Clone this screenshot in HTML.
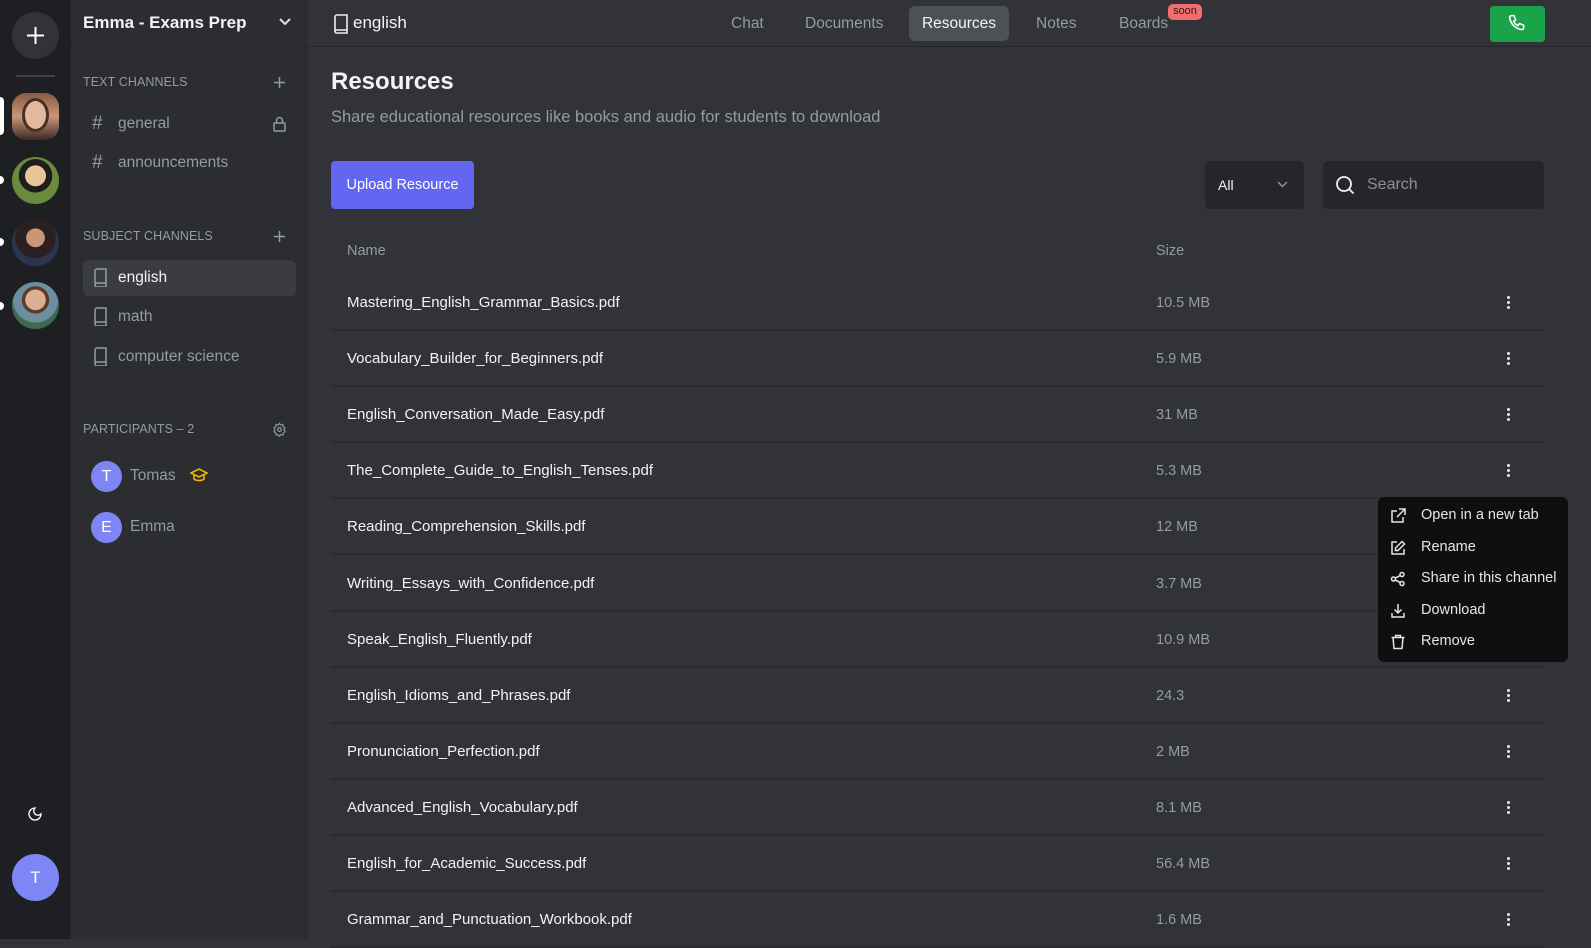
<!DOCTYPE html>
<html><head><meta charset="utf-8"><style>
*{margin:0;padding:0;box-sizing:border-box}
body{width:1591px;height:939px;overflow:hidden;background:#313338;font-family:"Liberation Sans",sans-serif;position:relative;color:#dbdee1}
.a{position:absolute}
.rail{left:0;top:0;width:71px;height:939px;background:#1e1f22}
.side{left:71px;top:0;width:237px;height:939px;background:#2b2d31}
.main{left:308px;top:0;right:0;height:939px;background:#313338}
.hdr{left:308px;top:0;right:0;height:47px;border-bottom:1px solid #26282c}
.sh{left:71px;top:0;width:237px;height:47px;border-bottom:1px solid #25272b}
.cat{font-size:12.5px;color:#949ba4;letter-spacing:.1px}
.ch{font-size:15.5px;color:#949ba4}
.av{border-radius:50%;width:47px;height:47px;left:12px}
.tab{top:6px;height:35px;line-height:35px;font-size:15.5px;color:#949ba4}
.row{left:331px;width:1213px;height:56px;border-bottom:2px solid #2a2b2f}
.nm{position:absolute;left:16px;top:0;line-height:56px;font-size:15px;color:#f2f3f5}
.sz{position:absolute;left:825px;top:0;line-height:56px;font-size:14.5px;color:#949ba4}
.dots{position:absolute;left:1176px;top:21px;width:3px}
.dots i{display:block;width:3px;height:3px;border-radius:50%;background:#e8e8e8;margin-bottom:2px}
.mi{left:1378px;width:190px;height:31px;font-size:14.5px;color:#e6e6e6}
.mi svg{position:absolute;left:12px;top:8px}
.mi span{position:absolute;left:43px;top:7px}
</style></head><body>
<div class="a rail"></div>
<div class="a side"></div>
<div class="a main"></div>
<div class="a hdr"></div>
<div class="a sh"></div>

<div class="a" style="left:12px;top:12px;width:47px;height:47px;border-radius:50%;background:#313338"></div>
<svg class="a" style="left:26px;top:26px" width="19" height="19" viewBox="0 0 19 19"><path d="M9.5 1v17M1 9.5h17" stroke="#fff" stroke-width="2"/></svg>
<div class="a" style="left:16px;top:75px;width:39px;height:2px;background:#3f4147"></div>
<div class="a" style="left:0;top:97px;width:4px;height:38px;background:#fff;border-radius:0 4px 4px 0"></div>
<div class="a" style="left:12px;top:93px;width:47px;height:47px;border-radius:14px;background:linear-gradient(#8a5a3e,#c9967a 50%,#3b2a25)"></div>
<div class="a" style="left:22px;top:98px;width:27px;height:34px;border-radius:50%;background:#e2b9a0;border:3px solid #4a2f22"></div>
<div class="a" style="left:0;top:176px;width:4px;height:8px;background:#fff;border-radius:0 4px 4px 0"></div>
<div class="a av" style="top:157px;background:radial-gradient(circle at 50% 40%,#e8c49a 0 28%,#1d1d1d 29% 45%,#6b8a3e 46%)"></div>
<div class="a" style="left:0;top:238px;width:4px;height:8px;background:#fff;border-radius:0 4px 4px 0"></div>
<div class="a av" style="top:219px;background:radial-gradient(circle at 50% 40%,#c89778 0 25%,#2a2020 26% 55%,#2b3550 56%)"></div>
<div class="a" style="left:0;top:302px;width:4px;height:8px;background:#fff;border-radius:0 4px 4px 0"></div>
<div class="a av" style="top:282px;background:radial-gradient(circle at 50% 38%,#dcae94 0 27%,#5a3a28 28% 36%,#6b8fa0 37% 60%,#3c6b50 61%)"></div>
<svg class="a" style="left:27px;top:806px" width="16" height="16" viewBox="0 0 24 24"><path d="M12 3a6 6 0 0 0 9 9 9 9 0 1 1-9-9z" fill="none" stroke="#fff" stroke-width="2"/></svg>
<div class="a" style="left:12px;top:854px;width:47px;height:47px;border-radius:50%;background:#7e86f6;color:#fff;text-align:center;line-height:47px;font-size:17px">T</div>

<div class="a" style="left:83px;top:13px;font-size:17px;font-weight:bold;color:#f2f3f5">Emma - Exams Prep</div>
<svg class="a" style="left:278px;top:17px" width="14" height="10" viewBox="0 0 14 10"><path d="M2 2l5 5 5-5" fill="none" stroke="#ddd" stroke-width="2"/></svg>
<div class="a cat" style="left:83px;top:75px">TEXT CHANNELS</div>
<svg class="a" style="left:273px;top:76px" width="13" height="13"><path d="M6.5 1v11M1 6.5h11" stroke="#949ba4" stroke-width="1.5"/></svg>
<div class="a ch" style="left:92px;top:113px;font-size:19px">#</div>
<div class="a ch" style="left:118px;top:115px">general</div>
<svg class="a" style="left:272px;top:116px" width="15" height="16" viewBox="0 0 15 16"><rect x="2" y="7" width="11" height="8" rx="1" fill="none" stroke="#949ba4" stroke-width="1.5"/><path d="M4.5 7V4.5a3 3 0 0 1 6 0V7" fill="none" stroke="#949ba4" stroke-width="1.5"/></svg>
<div class="a ch" style="left:92px;top:152px;font-size:19px">#</div>
<div class="a ch" style="left:118px;top:154px">announcements</div>
<div class="a cat" style="left:83px;top:229px">SUBJECT CHANNELS</div>
<svg class="a" style="left:273px;top:230px" width="13" height="13"><path d="M6.5 1v11M1 6.5h11" stroke="#949ba4" stroke-width="1.5"/></svg>
<div class="a" style="left:83px;top:260px;width:213px;height:36px;background:#3a3c42;border-radius:6px"></div>
<svg class="a" style="left:93px;top:268px" width="15" height="19" viewBox="0 0 15 19"><path d="M2 3a2 2 0 0 1 2-2h9v14H4a2 2 0 0 0-2 2zM2 17a2 2 0 0 0 2 2h9v-4" fill="none" stroke="#949ba4" stroke-width="1.5"/></svg>
<div class="a ch" style="left:118px;top:269px;color:#f2f3f5">english</div>
<svg class="a" style="left:93px;top:307px" width="15" height="19" viewBox="0 0 15 19"><path d="M2 3a2 2 0 0 1 2-2h9v14H4a2 2 0 0 0-2 2zM2 17a2 2 0 0 0 2 2h9v-4" fill="none" stroke="#949ba4" stroke-width="1.5"/></svg>
<div class="a ch" style="left:118px;top:308px">math</div>
<svg class="a" style="left:93px;top:347px" width="15" height="19" viewBox="0 0 15 19"><path d="M2 3a2 2 0 0 1 2-2h9v14H4a2 2 0 0 0-2 2zM2 17a2 2 0 0 0 2 2h9v-4" fill="none" stroke="#949ba4" stroke-width="1.5"/></svg>
<div class="a ch" style="left:118px;top:348px">computer science</div>
<div class="a cat" style="left:83px;top:422px">PARTICIPANTS – 2</div>
<svg class="a" style="left:272px;top:422px" width="15" height="15" viewBox="0 0 24 24"><circle cx="12" cy="12" r="3" fill="none" stroke="#949ba4" stroke-width="2"/><path d="M12 2l2 3 3.5-1 .5 3.5 3 2-2 3 2 3-3 2-.5 3.5-3.5-1-2 3-2-3-3.5 1-.5-3.5-3-2 2-3-2-3 3-2 .5-3.5 3.5 1z" fill="none" stroke="#949ba4" stroke-width="1.8"/></svg>
<div class="a" style="left:91px;top:461px;width:31px;height:31px;border-radius:50%;background:#7e86f6;color:#fff;text-align:center;line-height:31px;font-size:16px">T</div>
<div class="a ch" style="left:130px;top:467px">Tomas</div>
<svg class="a" style="left:190px;top:468px" width="18" height="16" viewBox="0 0 18 16"><path d="M1 5l8-4 8 4-8 4z M4 7v4c2 2 8 2 10 0V7" fill="none" stroke="#f0b400" stroke-width="1.6"/></svg>
<div class="a" style="left:91px;top:512px;width:31px;height:31px;border-radius:50%;background:#7e86f6;color:#fff;text-align:center;line-height:31px;font-size:16px">E</div>
<div class="a ch" style="left:130px;top:518px">Emma</div>

<svg class="a" style="left:333px;top:14px" width="16" height="20" viewBox="0 0 16 20"><path d="M2 3a2 2 0 0 1 2-2h10v15H4a2 2 0 0 0-2 2zM2 18a2 2 0 0 0 2 1h10v-3" fill="none" stroke="#eee" stroke-width="1.6"/></svg>
<div class="a" style="left:353px;top:13px;font-size:17px;color:#f2f3f5">english</div>
<div class="a tab" style="left:731px">Chat</div>
<div class="a tab" style="left:805px">Documents</div>
<div class="a tab" style="left:909px;width:100px;text-align:center;background:#4e5058;border-radius:6px;color:#f2f3f5">Resources</div>
<div class="a tab" style="left:1036px">Notes</div>
<div class="a tab" style="left:1119px">Boards</div>
<div class="a" style="left:1168px;top:4px;width:34px;height:16px;background:#f26d6d;border-radius:5px;color:#222;font-size:11px;text-align:center;line-height:15px">soon</div>
<div class="a" style="left:1490px;top:6px;width:55px;height:36px;background:#1aa34a;border-radius:4px"></div>
<svg class="a" style="left:1507px;top:13px" width="21" height="21" viewBox="0 0 24 24"><path d="M5 3h3l2 5-2.5 1.5a11 11 0 0 0 5 5L14 12l5 2v3a2 2 0 0 1-2 2A16 16 0 0 1 3 5a2 2 0 0 1 2-2" fill="none" stroke="#fff" stroke-width="1.8" stroke-linejoin="round"/></svg>

<div class="a" style="left:331px;top:68px;font-size:24px;font-weight:bold;color:#f2f3f5">Resources</div>
<div class="a" style="left:331px;top:108px;font-size:16.5px;color:#949ba4">Share educational resources like books and audio for students to download</div>
<div class="a" style="left:331px;top:161px;width:143px;height:48px;background:#6366f1;border-radius:4px;color:#fff;font-size:14.5px;text-align:center;line-height:48px">Upload Resource</div>
<div class="a" style="left:1205px;top:161px;width:99px;height:48px;background:#25262a;border-radius:5px"></div>
<div class="a" style="left:1218px;top:177px;font-size:14px;color:#f2f3f5">All</div>
<svg class="a" style="left:1277px;top:181px" width="11" height="8"><path d="M1 1l4.5 4.5L10 1" fill="none" stroke="#949ba4" stroke-width="1.4"/></svg>
<div class="a" style="left:1323px;top:161px;width:221px;height:48px;background:#25262a;border-radius:5px"></div>
<svg class="a" style="left:1335px;top:175px" width="20" height="20" viewBox="0 0 20 20"><circle cx="9" cy="9" r="7" fill="none" stroke="#f2f3f5" stroke-width="1.8"/><path d="M14 14l4.5 4.5" stroke="#f2f3f5" stroke-width="1.8"/></svg>
<div class="a" style="left:1367px;top:176px;font-size:16px;color:#8e9096">Search</div>
<div class="a" style="left:347px;top:243px;font-size:14.5px;color:#949ba4">Name</div>
<div class="a" style="left:1156px;top:243px;font-size:14.5px;color:#949ba4">Size</div>

<div class="a row" style="top:275px"><div class="nm">Mastering_English_Grammar_Basics.pdf</div><div class="sz">10.5 MB</div><div class="dots"><i></i><i></i><i></i></div></div>
<div class="a row" style="top:331px"><div class="nm">Vocabulary_Builder_for_Beginners.pdf</div><div class="sz">5.9 MB</div><div class="dots"><i></i><i></i><i></i></div></div>
<div class="a row" style="top:387px"><div class="nm">English_Conversation_Made_Easy.pdf</div><div class="sz">31 MB</div><div class="dots"><i></i><i></i><i></i></div></div>
<div class="a row" style="top:443px"><div class="nm">The_Complete_Guide_to_English_Tenses.pdf</div><div class="sz">5.3 MB</div><div class="dots"><i></i><i></i><i></i></div></div>
<div class="a row" style="top:499px"><div class="nm">Reading_Comprehension_Skills.pdf</div><div class="sz">12 MB</div></div>
<div class="a row" style="top:556px"><div class="nm">Writing_Essays_with_Confidence.pdf</div><div class="sz">3.7 MB</div></div>
<div class="a row" style="top:612px"><div class="nm">Speak_English_Fluently.pdf</div><div class="sz">10.9 MB</div></div>
<div class="a row" style="top:668px"><div class="nm">English_Idioms_and_Phrases.pdf</div><div class="sz">24.3</div><div class="dots"><i></i><i></i><i></i></div></div>
<div class="a row" style="top:724px"><div class="nm">Pronunciation_Perfection.pdf</div><div class="sz">2 MB</div><div class="dots"><i></i><i></i><i></i></div></div>
<div class="a row" style="top:780px"><div class="nm">Advanced_English_Vocabulary.pdf</div><div class="sz">8.1 MB</div><div class="dots"><i></i><i></i><i></i></div></div>
<div class="a row" style="top:836px"><div class="nm">English_for_Academic_Success.pdf</div><div class="sz">56.4 MB</div><div class="dots"><i></i><i></i><i></i></div></div>
<div class="a row" style="top:892px"><div class="nm">Grammar_and_Punctuation_Workbook.pdf</div><div class="sz">1.6 MB</div><div class="dots"><i></i><i></i><i></i></div></div>

<div class="a" style="left:1378px;top:497px;width:190px;height:165px;background:#0f0f10;border-radius:6px"></div>
<div class="a mi" style="top:500px"><svg width="16" height="16" viewBox="0 0 16 16" fill="none" stroke="#e6e6e6" stroke-width="1.5"><path d="M7 3H2v11h11V9M9 1h6v6M15 1L7 9"/></svg><span>Open in a new tab</span></div>
<div class="a mi" style="top:532px"><svg width="16" height="16" viewBox="0 0 16 16" fill="none" stroke="#e6e6e6" stroke-width="1.5"><path d="M7 2H2v12h12V9M12 1.5l2.5 2.5L8 10.5H5.5V8z"/></svg><span>Rename</span></div>
<div class="a mi" style="top:563px"><svg width="16" height="16" viewBox="0 0 16 16" fill="none" stroke="#e6e6e6" stroke-width="1.5"><circle cx="3.5" cy="8" r="2"/><circle cx="12" cy="3.5" r="2"/><circle cx="12" cy="12.5" r="2"/><path d="M5.3 7l5-2.6M5.3 9l5 2.6"/></svg><span>Share in this channel</span></div>
<div class="a mi" style="top:595px"><svg width="16" height="16" viewBox="0 0 16 16" fill="none" stroke="#e6e6e6" stroke-width="1.5"><path d="M2 10v4h12v-4M8 1v9M4.5 6.5L8 10l3.5-3.5"/></svg><span>Download</span></div>
<div class="a mi" style="top:626px"><svg width="16" height="16" viewBox="0 0 16 16" fill="none" stroke="#e6e6e6" stroke-width="1.5"><path d="M1.5 3.5h13M5.5 3.5V1.5h5v2M3 3.5l1 11h8l1-11"/></svg><span>Remove</span></div>
</body></html>
